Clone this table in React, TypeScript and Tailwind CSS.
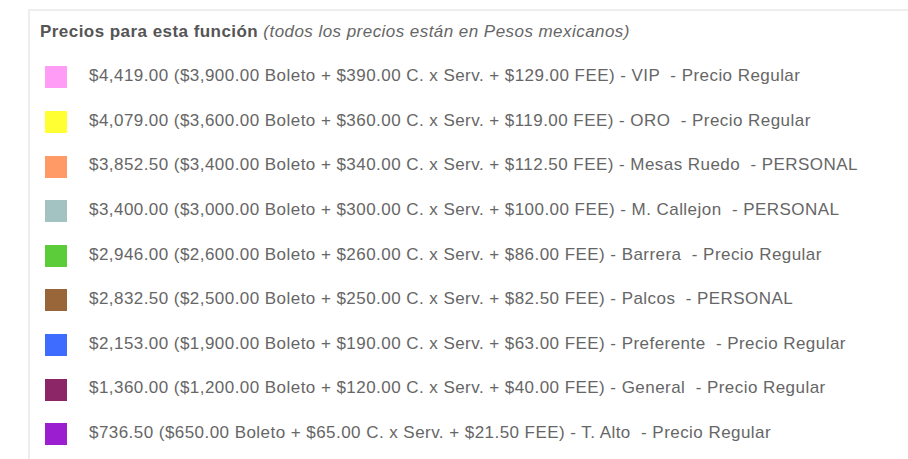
const precios = [
  { color: "bg-[#ff9cf6]", text: "$4,419.00 ($3,900.00 Boleto + $390.00 C. x Serv. + $129.00 FEE) - VIP  - Precio Regular" },
  { color: "bg-[#ffff33]", text: "$4,079.00 ($3,600.00 Boleto + $360.00 C. x Serv. + $119.00 FEE) - ORO  - Precio Regular" },
  { color: "bg-[#ff9966]", text: "$3,852.50 ($3,400.00 Boleto + $340.00 C. x Serv. + $112.50 FEE) - Mesas Ruedo  - PERSONAL" },
  { color: "bg-[#a3c2c2]", text: "$3,400.00 ($3,000.00 Boleto + $300.00 C. x Serv. + $100.00 FEE) - M. Callejon  - PERSONAL" },
  { color: "bg-[#5ccc3a]", text: "$2,946.00 ($2,600.00 Boleto + $260.00 C. x Serv. + $86.00 FEE) - Barrera  - Precio Regular" },
  { color: "bg-[#99663a]", text: "$2,832.50 ($2,500.00 Boleto + $250.00 C. x Serv. + $82.50 FEE) - Palcos  - PERSONAL" },
  { color: "bg-[#3d6cff]", text: "$2,153.00 ($1,900.00 Boleto + $190.00 C. x Serv. + $63.00 FEE) - Preferente  - Precio Regular" },
  { color: "bg-[#8c2666]", text: "$1,360.00 ($1,200.00 Boleto + $120.00 C. x Serv. + $40.00 FEE) - General  - Precio Regular" },
  { color: "bg-[#9b1fd1]", text: "$736.50 ($650.00 Boleto + $65.00 C. x Serv. + $21.50 FEE) - T. Alto  - Precio Regular" },
];

export default function App() {
  return (
    <div className="w-[908px] h-[459px] overflow-hidden bg-white pl-[28px] pt-[9px]" style={{ fontFamily: '"Liberation Sans", Arial, sans-serif' }}>
      <div className="border-l-2 border-t-2 border-[#eeeeee] h-[470px] pl-[10px] pt-[11px]">
        <h3 className="text-[17px] leading-[20px] tracking-[0.45px] text-[#555555]">
          <span className="font-bold">Precios para esta función</span>{" "}
          <span className="italic text-[#666666]">(todos los precios están en Pesos mexicanos)</span>
        </h3>
        <ul className="mt-[13px]">
          {precios.map((p) => (
            <li key={p.text} className="flex items-center h-[44.625px]">
              <span className={`w-[22px] h-[22px] ml-[5px] shrink-0 ${p.color}`} />
              <span className="ml-[22px] text-[17px] tracking-[0.45px] text-[#666666] whitespace-pre -mt-[3px]">{p.text}</span>
            </li>
          ))}
        </ul>
      </div>
    </div>
  );
}
